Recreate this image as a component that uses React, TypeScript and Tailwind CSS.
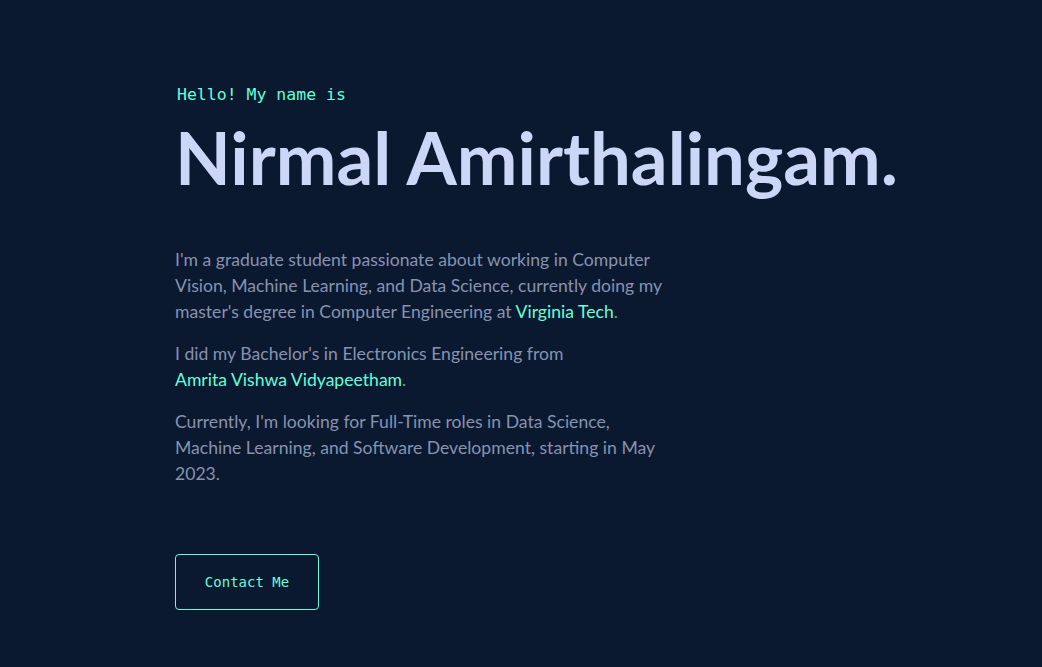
import React from 'react';

const App = () => {
  return (
    <div className="min-h-screen bg-[#0a192f] font-['Lato',sans-serif]">
      <section className="pl-[175px] pt-[84px]">
        <h1 className="ml-[2px] font-['DejaVu_Sans_Mono',monospace] text-[16.5px] leading-[22px] text-[#64ffda]">
          Hello! My name is
        </h1>
        <h2 className="mt-[11px] text-[72.5px] font-bold leading-[80px] text-[#ccd6f6]">
          Nirmal Amirthalingam.
        </h2>
        <div className="mt-[50px] max-w-[500px] text-[17.6px] leading-[26px] text-[#8892b0]">
          <p>
            I'm a graduate student passionate about working in Computer Vision, Machine Learning, and Data
            Science, currently doing my master's degree in Computer Engineering at{' '}
            <a className="whitespace-nowrap text-[#64ffda]">Virginia Tech</a>.
          </p>
          <p className="mt-4">
            I did my Bachelor's in Electronics Engineering from{' '}
            <a className="whitespace-nowrap text-[#64ffda]">Amrita Vishwa Vidyapeetham</a>.
          </p>
          <p className="mt-4">
            Currently, I'm looking for Full-Time roles in Data Science, Machine Learning, and Software
            Development, starting in May 2023.
          </p>
        </div>
        <button className="mt-[67px] h-[56px] w-[144px] rounded-[4px] border border-[#64ffda] font-['DejaVu_Sans_Mono',monospace] text-[14px] text-[#64ffda]">
          Contact Me
        </button>
      </section>
    </div>
  );
};

export default App;
